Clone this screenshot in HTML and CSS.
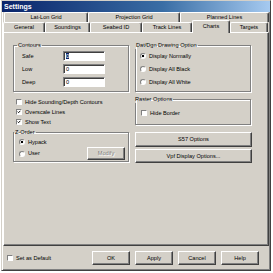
FILE: index.html
```html
<!DOCTYPE html>
<html lang="en">
<head>
    <meta charset="UTF-8">
    <title>Settings</title>
    <link rel="stylesheet" href="styles.css">
</head>
<body>

    <div class="dialog">
        <div class="titlebar">Settings</div>

        <div class="tab-row back">
            <div class="tab">Lat-Lon Grid</div>
            <div class="tab">Projection Grid</div>
            <div class="tab">Planned Lines</div>
        </div>
        <div class="tab-row front">
            <div class="tab">General</div>
            <div class="tab">Soundings</div>
            <div class="tab">Seabed ID</div>
            <div class="tab">Track Lines</div>
            <div class="tab active">Charts</div>
            <div class="tab">Targets</div>
        </div>

        <div class="panel">
            <div class="col">
                <fieldset class="group contours">
                    <legend>Contours</legend>
                    <div class="field"><span class="field-label">Safe</span><span class="input"><span class="selected">0</span></span></div>
                    <div class="field"><span class="field-label">Low</span><span class="input">0</span></div>
                    <div class="field"><span class="field-label">Deep</span><span class="input">0</span></div>
                </fieldset>

                <div class="checks">
                    <div class="option"><span class="checkbox"></span>Hide Sounding/Depth Contours</div>
                    <div class="option"><span class="checkbox checked"><svg viewBox="0 0 6 6"><polyline points="1,2.5 2.4,4 5,1.2" /></svg></span>Overscale Lines</div>
                    <div class="option"><span class="checkbox checked"><svg viewBox="0 0 6 6"><polyline points="1,2.5 2.4,4 5,1.2" /></svg></span>Show Text</div>
                </div>

                <fieldset class="group zorder">
                    <legend>Z-Order</legend>
                    <div class="option"><span class="radio on"></span>Hypack</div>
                    <div class="option user-row"><span class="radio"></span>User<span class="btn disabled modify">Modify</span></div>
                </fieldset>
            </div>

            <div class="col">
                <fieldset class="group drawing">
                    <legend>Dat/Dgn Drawing Option</legend>
                    <div class="option"><span class="radio on"></span>Display Normally</div>
                    <div class="option"><span class="radio"></span>Display All Black</div>
                    <div class="option"><span class="radio"></span>Display All White</div>
                </fieldset>

                <fieldset class="group raster">
                    <legend>Raster Options</legend>
                    <div class="option"><span class="checkbox"></span>Hide Border</div>
                </fieldset>

                <div class="btn wide s57">S57 Options</div>
                <div class="btn wide vpf">Vpf Display Options...</div>
            </div>
        </div>

        <div class="footer">
            <div class="option"><span class="checkbox"></span>Set as Default</div>
            <div class="footer-buttons">
                <span class="btn">OK</span>
                <span class="btn">Apply</span>
                <span class="btn">Cancel</span>
                <span class="btn">Help</span>
            </div>
        </div>
    </div>

</body>
</html>
```

FILE: styles.css
```css
body {
    margin: 0;
    padding: 0;
    background-color: #fff;
    font-family: "Liberation Sans", Arial, sans-serif;
    font-size: 5.6px;
    line-height: 7px;
    color: #000;
}

.dialog {
    box-sizing: border-box;
    margin-left: 1px;
    width: 270px;
    height: 271px;
    background-color: #d4d0c8;
    border: 1px solid;
    border-color: #d4d0c8 #404040 #404040 #d4d0c8;
    box-shadow: inset 1px 1px 0 #fff, inset -1px -1px 0 #808080;
    display: flex;
    flex-direction: column;
}

.titlebar {
    height: 11px;
    line-height: 11px;
    padding-left: 2px;
    background: linear-gradient(to right, #0a246a, #3a6ea5 60%, #a6caf0);
    color: #fff;
    font-size: 7px;
    font-weight: bold;
}

/* tabs */

.tab-row {
    display: grid;
    height: 10px;
}

.tab-row.back {
    margin-left: 2px;
    grid-template-columns: 84px 92px 89px;
}

.tab-row.front {
    margin-left: 1px;
    grid-template-columns: 42px 45px 52px 50px 38px 38px;
}

.tab {
    box-sizing: border-box;
    border-top: 1px solid #fff;
    border-left: 1px solid #fff;
    border-right: 1px solid #404040;
    border-radius: 2px 2px 0 0;
    box-shadow: inset -1px 0 0 #808080;
    text-align: center;
    line-height: 9px;
}

.tab.active {
    position: relative;
    z-index: 1;
    margin-top: -2px;
    height: 13px;
    background-color: #d4d0c8;
    line-height: 10px;
}

/* page */

.panel {
    box-sizing: border-box;
    margin-left: 1px;
    width: 266px;
    height: 214px;
    border: 1px solid;
    border-color: #fff #404040 #404040 #fff;
    box-shadow: inset -1px -1px 0 #808080;
    padding: 9px 0 0 9px;
    display: grid;
    grid-template-columns: 116px 116px;
    column-gap: 6px;
    align-items: start;
}

.col {
    display: flex;
    flex-direction: column;
}

.group {
    margin: 0;
    border: 1px solid #808080;
    box-shadow: 1px 1px 0 #fff, inset 1px 1px 0 #fff;
    padding: 0 4px 4px 8px;
}

.group legend {
    padding: 0 1px;
    margin-left: -5px;
    line-height: 7px;
}

.contours {
    display: flex;
    flex-direction: column;
    gap: 3px;
    padding-top: 2px;
}

.field {
    display: flex;
    align-items: center;
    height: 10px;
}

.field-label {
    width: 41px;
}

.input {
    box-sizing: border-box;
    width: 42px;
    height: 10px;
    background-color: #fff;
    border: 1px solid;
    border-color: #808080 #fff #fff #808080;
    box-shadow: inset 1px 1px 0 #404040;
    padding-left: 2px;
    line-height: 8px;
}

.selected {
    background-color: #0a246a;
    color: #fff;
}

.option {
    display: flex;
    align-items: center;
    height: 10px;
    white-space: nowrap;
}

.checkbox {
    box-sizing: border-box;
    flex: none;
    width: 6px;
    height: 6px;
    margin: 0 3px 0 2px;
    background-color: #fff;
    border: 1px solid;
    border-color: #808080 #fff #fff #808080;
    display: flex;
}

.checkbox svg {
    width: 4px;
    height: 4px;
}

.checkbox polyline {
    fill: none;
    stroke: #000;
    stroke-width: 1.4;
}

.radio {
    box-sizing: border-box;
    flex: none;
    width: 6px;
    height: 6px;
    margin: 0 3px 0 0;
    border-radius: 50%;
    background-color: #fff;
    border: 1px solid;
    border-color: #808080 #fff #fff #808080;
}

.radio.on {
    background: radial-gradient(circle, #000 0 1.2px, #fff 1.6px);
}

.checks {
    margin-top: 5px;
    margin-left: 1px;
}

.zorder {
    margin-top: 2px;
    padding: 1px 4px 1px 5px;
}

.zorder .user-row {
    height: 13px;
}

.drawing {
    display: flex;
    flex-direction: column;
    gap: 3px;
    padding: 2px 4px 4px 4px;
}

.raster {
    margin-top: 4px;
    padding: 5px 4px 6px 3px;
}

/* buttons */

.btn {
    box-sizing: border-box;
    display: flex;
    align-items: center;
    justify-content: center;
    background-color: #d4d0c8;
    border: 1px solid;
    border-color: #fff #404040 #404040 #fff;
    box-shadow: inset -1px -1px 0 #808080;
}

.btn.disabled {
    color: #808080;
    text-shadow: 1px 1px 0 #fff;
}

.modify {
    width: 38px;
    height: 13px;
    margin-left: auto;
    margin-right: -1px;
}

.wide {
    width: 117px;
}

.s57 {
    margin-top: 7px;
    height: 15px;
}

.vpf {
    margin-top: 2px;
    height: 14px;
}

/* bottom */

.footer {
    flex: 1;
    display: flex;
    align-items: center;
    padding: 0 11px 0 3px;
}

.footer-buttons {
    margin-left: auto;
    display: flex;
    gap: 5px;
}

.footer-buttons .btn {
    width: 38px;
    height: 14px;
}
```
